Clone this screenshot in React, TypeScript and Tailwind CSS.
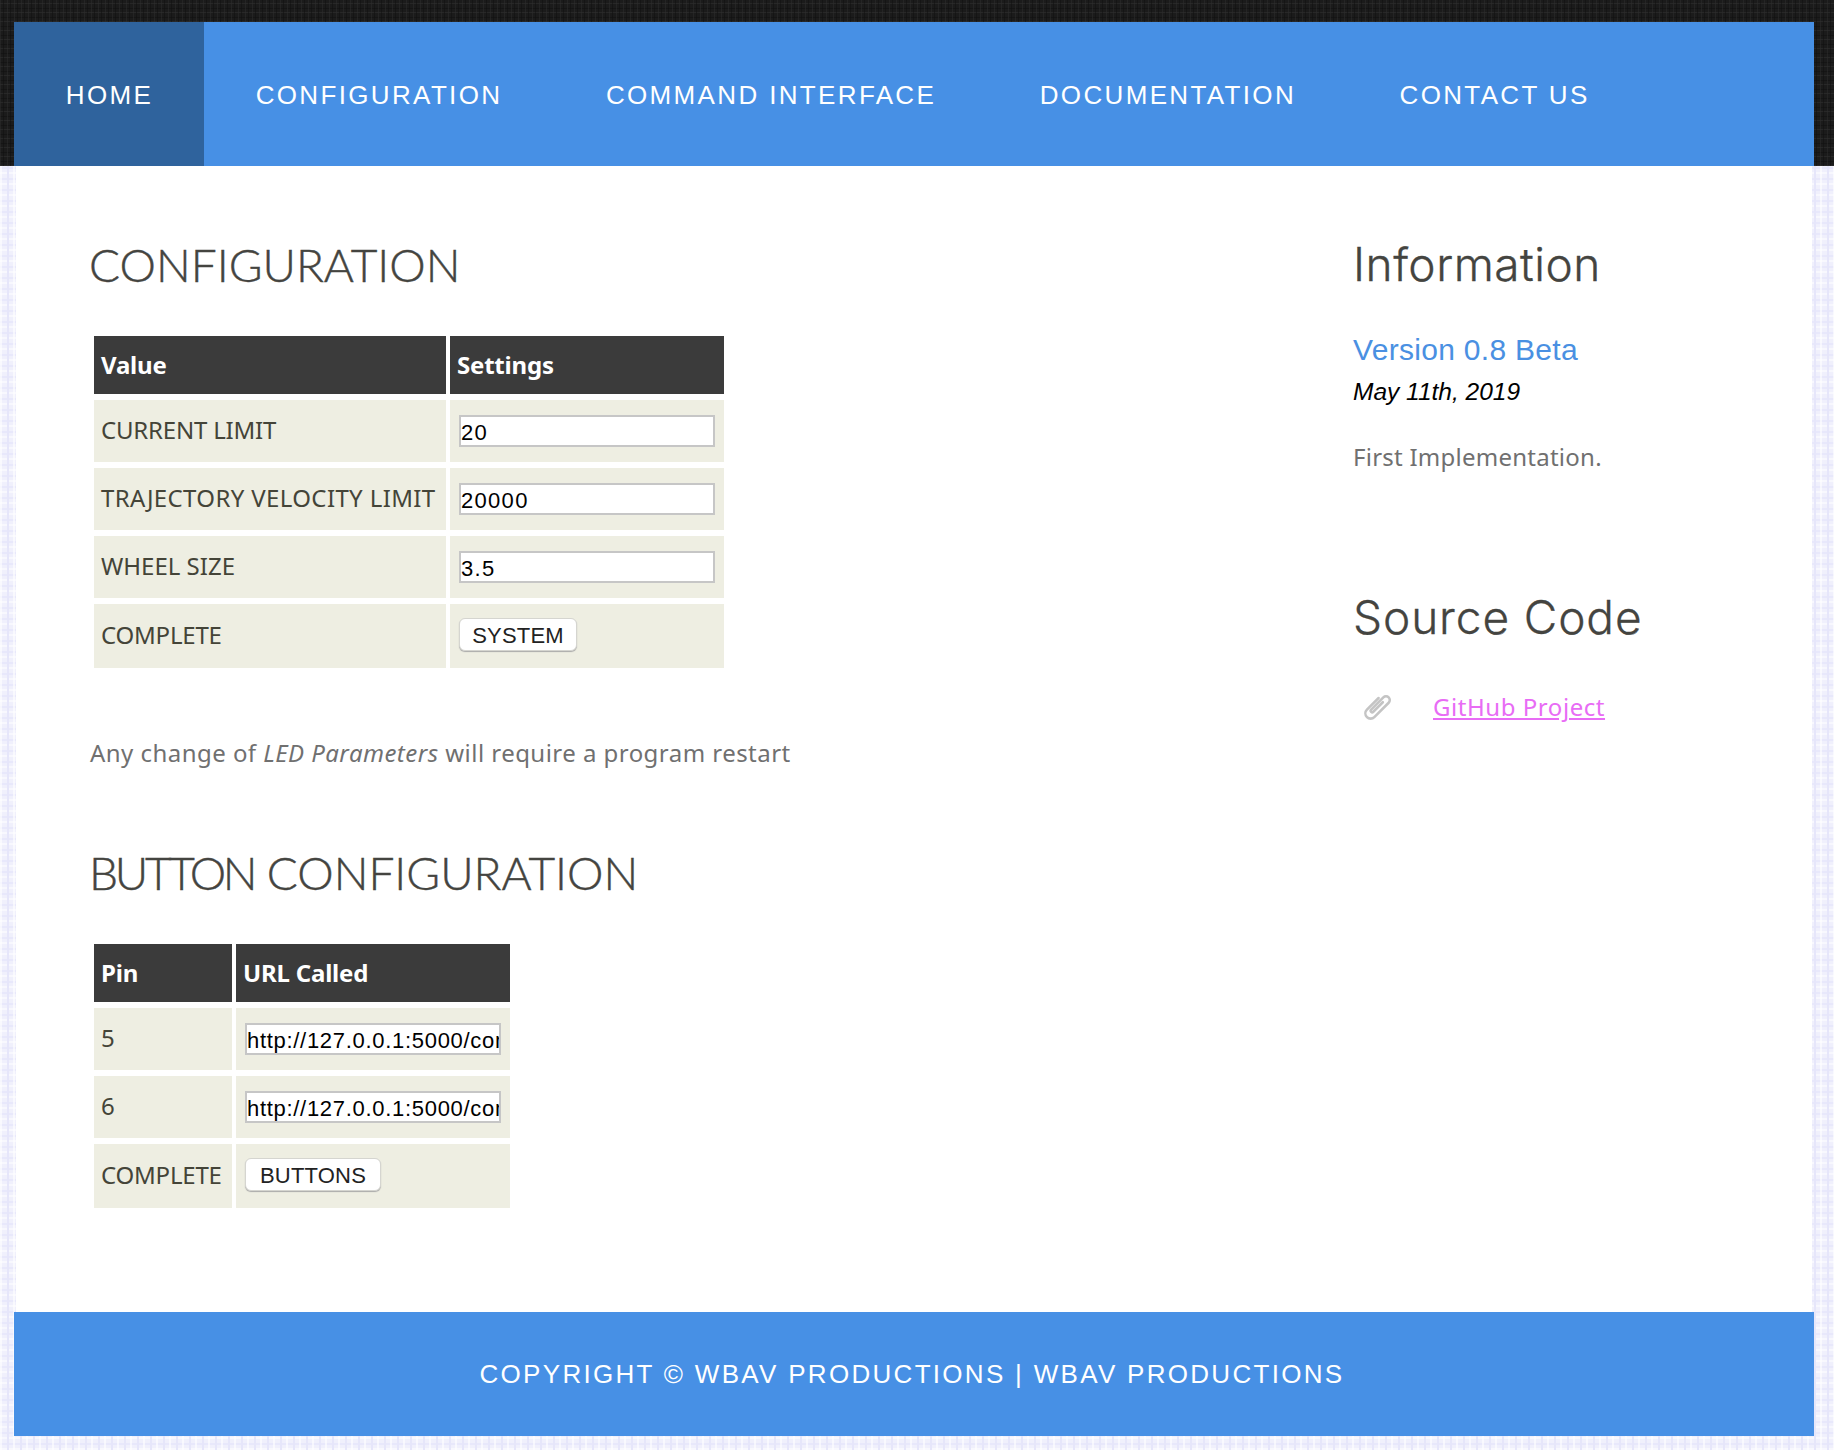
import React from "react";

const NAV = ["HOME", "CONFIGURATION", "COMMAND INTERFACE", "DOCUMENTATION", "CONTACT US"];

const bodyFont = "font-['Noto_Sans',sans-serif]";
const capsHead = "font-['Lato',sans-serif] font-light [-webkit-text-stroke:0.45px_#444440]";
const lowerHead = "font-['Inter',sans-serif] font-light [-webkit-text-stroke:0.3px_#444440]";
const arial = "font-['Liberation_Sans',Arial,sans-serif]";

function HeadCell({ w, children }: { w: string; children: React.ReactNode }) {
  return (
    <th className={`${w} h-[58px] bg-[#3b3b3b] pl-[7px] text-left text-[24px] font-bold tracking-[-0.2px] text-white`}>
      {children}
    </th>
  );
}

function TextInput({ value, w, spacing }: { value: string; w: string; spacing: string }) {
  return (
    <input
      readOnly
      value={value}
      className={`${w} ${spacing} block h-[32px] border-2 border-[#c6c6c6] bg-white pt-[2px] ${arial} text-[22px] text-black outline-none`}
    />
  );
}

function Action({ label, w }: { label: string; w: string }) {
  return (
    <button className={`${w} mb-[4px] block h-[33px] rounded-[6px] border border-[#d5d5d0] bg-white ${arial} text-[22px] tracking-[0.2px] text-[#222] shadow-[0_1px_1px_#aaa]`}>
      {label}
    </button>
  );
}

function Row({ label, w, h = "h-[62px]", spacing = "tracking-[-0.2px]", children }: { label: string; w: string; h?: string; spacing?: string; children: React.ReactNode }) {
  return (
    <tr>
      <td className={`${w} ${h} ${spacing} whitespace-nowrap bg-[#eeeee2] pb-[2px] pl-[7px] text-[24px] text-[#444438]`}>{label}</td>
      <td className="bg-[#eeeee2] pl-[9px] tracking-normal">{children}</td>
    </tr>
  );
}

function Paperclip() {
  return (
    <svg width="36" height="36" viewBox="0 0 24 24" fill="none" stroke="#c4c4c4" strokeWidth="1.7" strokeLinecap="round" className="block">
      <g transform="rotate(45 12 12)">
        <path d="M8.5 7v11a3.5 3.5 0 0 0 7 0V4.5a2.5 2.5 0 0 0-5 0V16a1 1 0 0 0 2 0V7" />
      </g>
    </svg>
  );
}

export default function App() {
  return (
    <div className="min-h-[1450px] bg-[#f0f0fc] bg-[repeating-linear-gradient(90deg,#ffffffa0_0_2px,transparent_2px_7px,#e6e6fa_7px_9px,transparent_9px_13px),repeating-linear-gradient(0deg,#ffffff90_0_2px,transparent_2px_5px,#e8e8fb_5px_7px,transparent_7px_11px)] pb-[14px]">
      {/* top band + nav */}
      <div className="bg-[#1b1b1b] bg-[repeating-linear-gradient(90deg,#2e2e2e80_0_1px,transparent_1px_3px,#0f0f0f80_3px_4px,transparent_4px_7px),repeating-linear-gradient(0deg,#33333380_0_1px,transparent_1px_4px,#0f0f0f80_4px_5px,transparent_5px_9px)] pl-[14px] pr-[20px] pt-[22px]">
        <nav className={`flex h-[144px] bg-[#4790e5] ${arial}`}>
          {NAV.map((item, i) => (
            <a
              key={item}
              className={`flex items-center pl-[51.75px] pt-[2px] text-[26px] tracking-[2.35px] text-white ${i === 0 ? "bg-[#2f639d] pr-[50.75px]" : "pr-[51.75px]"}`}
            >
              {item}
            </a>
          ))}
        </nav>
      </div>

      {/* main */}
      <main className={`ml-[16px] mr-[22px] flex h-[1146px] bg-white ${bodyFont}`}>
        <div className="w-[1337px] pl-[74px] pt-[69px]">
          <h2 className={`${capsHead} -ml-[1px] text-[46px] leading-[60px] text-[#444440]`}>CONFIGURATION</h2>
          <table className="mt-[35px] border-separate border-spacing-x-[4px] border-spacing-y-[6px]">
            <thead>
              <tr>
                <HeadCell w="w-[352px]">Value</HeadCell>
                <HeadCell w="w-[274px]">Settings</HeadCell>
              </tr>
            </thead>
            <tbody>
              <Row label="CURRENT LIMIT" w="w-[352px]">
                <TextInput value="20" w="w-[256px]" spacing="tracking-[1.3px]" />
              </Row>
              <Row label="TRAJECTORY VELOCITY LIMIT" w="w-[352px]" spacing="tracking-[0.37px]">
                <TextInput value="20000" w="w-[256px]" spacing="tracking-[1.3px]" />
              </Row>
              <Row label="WHEEL SIZE" w="w-[352px]" spacing="tracking-normal">
                <TextInput value="3.5" w="w-[256px]" spacing="tracking-[1.3px]" />
              </Row>
              <Row label="COMPLETE" w="w-[352px]" h="h-[64px]">
                <Action label="SYSTEM" w="w-[118px]" />
              </Row>
            </tbody>
          </table>
          <p className="mt-[64px] text-[24px] leading-[30px] tracking-[0.46px] text-[#707070]">
            Any change of <em>LED Parameters</em> will require a program restart
          </p>
          <h2 className={`${capsHead} -ml-[1px] mt-[75px] text-[46px] leading-[60px] text-[#444440]`}>
            <span className="tracking-[-3.3px]">BUTTON</span> CONFIGURATION
          </h2>
          <table className="mt-[35px] border-separate border-spacing-x-[4px] border-spacing-y-[6px]">
            <thead>
              <tr>
                <HeadCell w="w-[138px]">Pin</HeadCell>
                <HeadCell w="w-[274px]">URL Called</HeadCell>
              </tr>
            </thead>
            <tbody>
              <Row label="5" w="w-[138px]">
                <TextInput value="http://127.0.0.1:5000/command" w="w-[256px]" spacing="tracking-[0.7px]" />
              </Row>
              <Row label="6" w="w-[138px]">
                <TextInput value="http://127.0.0.1:5000/command" w="w-[256px]" spacing="tracking-[0.7px]" />
              </Row>
              <Row label="COMPLETE" w="w-[138px]" h="h-[64px]">
                <Action label="BUTTONS" w="w-[136px]" />
              </Row>
            </tbody>
          </table>
        </div>

        <aside className="flex-1 pt-[68px]">
          <h2 className={`${lowerHead} text-[46px] leading-[60px] tracking-[0.5px] text-[#444440]`}>Information</h2>
          <h3 className={`mt-[41px] ${arial} text-[30px] leading-[30px] tracking-[0.3px] text-[#4a90e2]`}>Version 0.8 Beta</h3>
          <p className={`mt-[14px] ${arial} text-[24.5px] italic leading-[26px] text-black`}>May 11th, 2019</p>
          <p className="mt-[37px] text-[24px] leading-[30px] tracking-[0.25px] text-[#707070]">First Implementation.</p>
          <h2 className={`${lowerHead} mt-[115px] text-[46px] leading-[60px] tracking-[0.9px] text-[#444440]`}>Source Code</h2>
          <div className="mt-[42px] flex items-center">
            <div className="w-[80px] pl-[6px]">
              <Paperclip />
            </div>
            <a className="text-[24px] leading-[30px] tracking-[0.55px] text-[#e86cf5] underline">GitHub Project</a>
          </div>
        </aside>
      </main>

      {/* footer */}
      <footer className={`ml-[14px] mr-[20px] flex h-[124px] items-center justify-center bg-[#4790e5] pr-[4px] ${arial} text-[26px] tracking-[2.3px] text-white`}>
        COPYRIGHT © WBAV PRODUCTIONS | WBAV PRODUCTIONS
      </footer>
    </div>
  );
}
